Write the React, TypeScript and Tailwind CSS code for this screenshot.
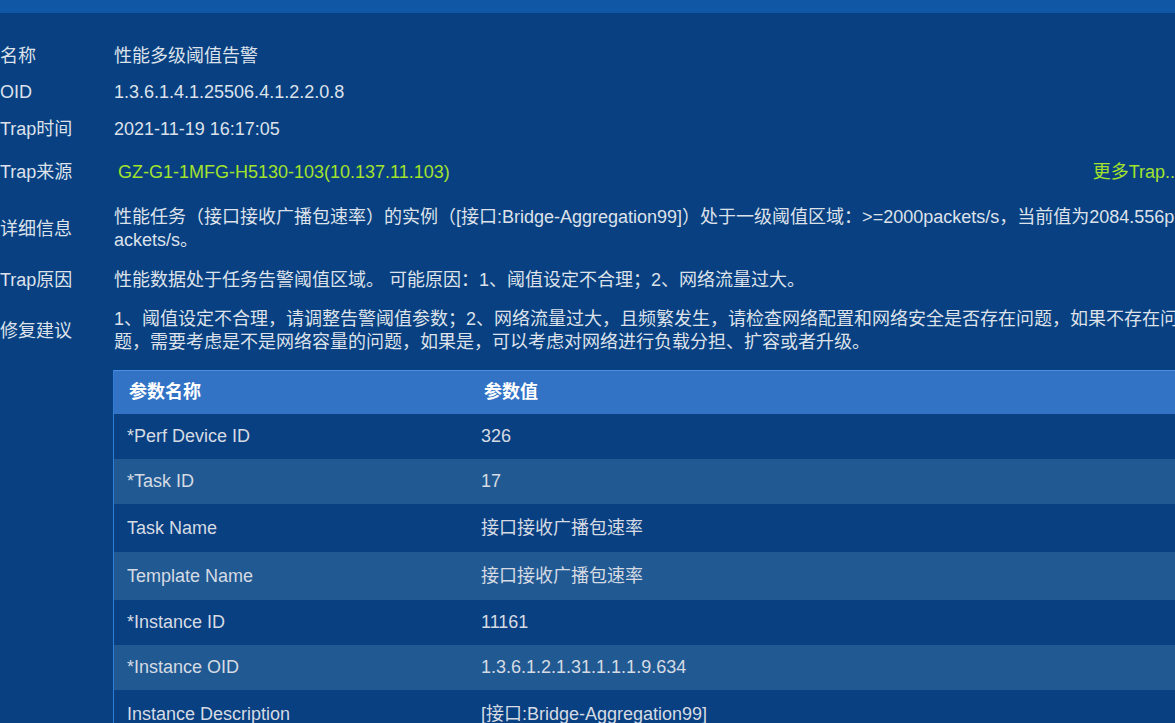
const info = [
  { label: "名称", value: "性能多级阈值告警", mt: "mt-[32px]" },
  { label: "OID", value: "1.3.6.1.4.1.25506.4.1.2.2.0.8", mt: "mt-[13px]" },
  { label: "Trap时间", value: "2021-11-19 16:17:05", mt: "mt-[14px]" }
];

const params = [
  { name: "*Perf Device ID", value: "326", h: "h-[45px]" },
  { name: "*Task ID", value: "17", h: "h-[45px]" },
  { name: "Task Name", value: "接口接收广播包速率", h: "h-[48px]" },
  { name: "Template Name", value: "接口接收广播包速率", h: "h-[48px]" },
  { name: "*Instance ID", value: "11161", h: "h-[45px]" },
  { name: "*Instance OID", value: "1.3.6.1.2.1.31.1.1.1.9.634", h: "h-[45px]" },
  { name: "Instance Description", value: "[接口:Bridge-Aggregation99]", h: "h-[48px]" }
];

function Row({ label, mt, children }: { label: string; mt: string; children: React.ReactNode }) {
  return (
    <div className={`flex items-center ${mt}`}>
      <div className="w-[114px] shrink-0">{label}</div>
      <div className="flex-1 min-w-0">{children}</div>
    </div>
  );
}

export default function App() {
  return (
    <div className="relative h-[723px] w-[1175px] overflow-hidden bg-[#084082] font-['Liberation_Sans','Noto_Sans_CJK_SC',sans-serif] text-[18px] leading-[23px] text-[#dde2ea]">
      <div className="w-[1180px]">
        <div className="h-[13px] bg-[#1058a6]" />

        {info.map((item) => (
          <Row key={item.label} label={item.label} mt={item.mt}>
            {item.value}
          </Row>
        ))}

        <Row label="Trap来源" mt="mt-[20px]">
          <div className="flex justify-between pl-[4px] text-[#a3e22c]">
            <span>GZ-G1-1MFG-H5130-103(10.137.11.103)</span>
            <span className="whitespace-nowrap">更多Trap...</span>
          </div>
        </Row>

        <Row label="详细信息" mt="mt-[22px]">
          <p className="break-all">
            性能任务（接口接收广播包速率）的实例（[接口:Bridge-Aggregation99]）处于一级阈值区域：&gt;=2000packets/s，当前值为2084.556packets/s。
          </p>
        </Row>

        <Row label="Trap原因" mt="mt-[17px]">
          性能数据处于任务告警阈值区域。 可能原因：1、阈值设定不合理；2、网络流量过大。
        </Row>

        <Row label="修复建议" mt="mt-[16px]">
          <p className="break-all">
            1、阈值设定不合理，请调整告警阈值参数；2、网络流量过大，且频繁发生，请检查网络配置和网络安全是否存在问题，如果不存在问题，需要考虑是不是网络容量的问题，如果是，可以考虑对网络进行负载分担、扩容或者升级。
          </p>
        </Row>

        <div className="ml-[113px] mt-[16px] border-l border-[#2f7fd8]">
          <div className="flex h-[44px] items-center border-t border-[#4a8fe0] bg-[#3273c6] font-bold text-white">
            <div className="w-[367px] pl-[15px]">参数名称</div>
            <div className="pl-[3px]">参数值</div>
          </div>
          {params.map((p, i) => (
            <div
              key={p.name}
              className={`flex items-center ${p.h} ${i % 2 === 0 ? "bg-[#084082]" : "bg-[#215a93]"} text-[#d6dbe3]`}
            >
              <div className="w-[367px] pl-[13px]">{p.name}</div>
              <div>{p.value}</div>
            </div>
          ))}
        </div>
      </div>
    </div>
  );
}
